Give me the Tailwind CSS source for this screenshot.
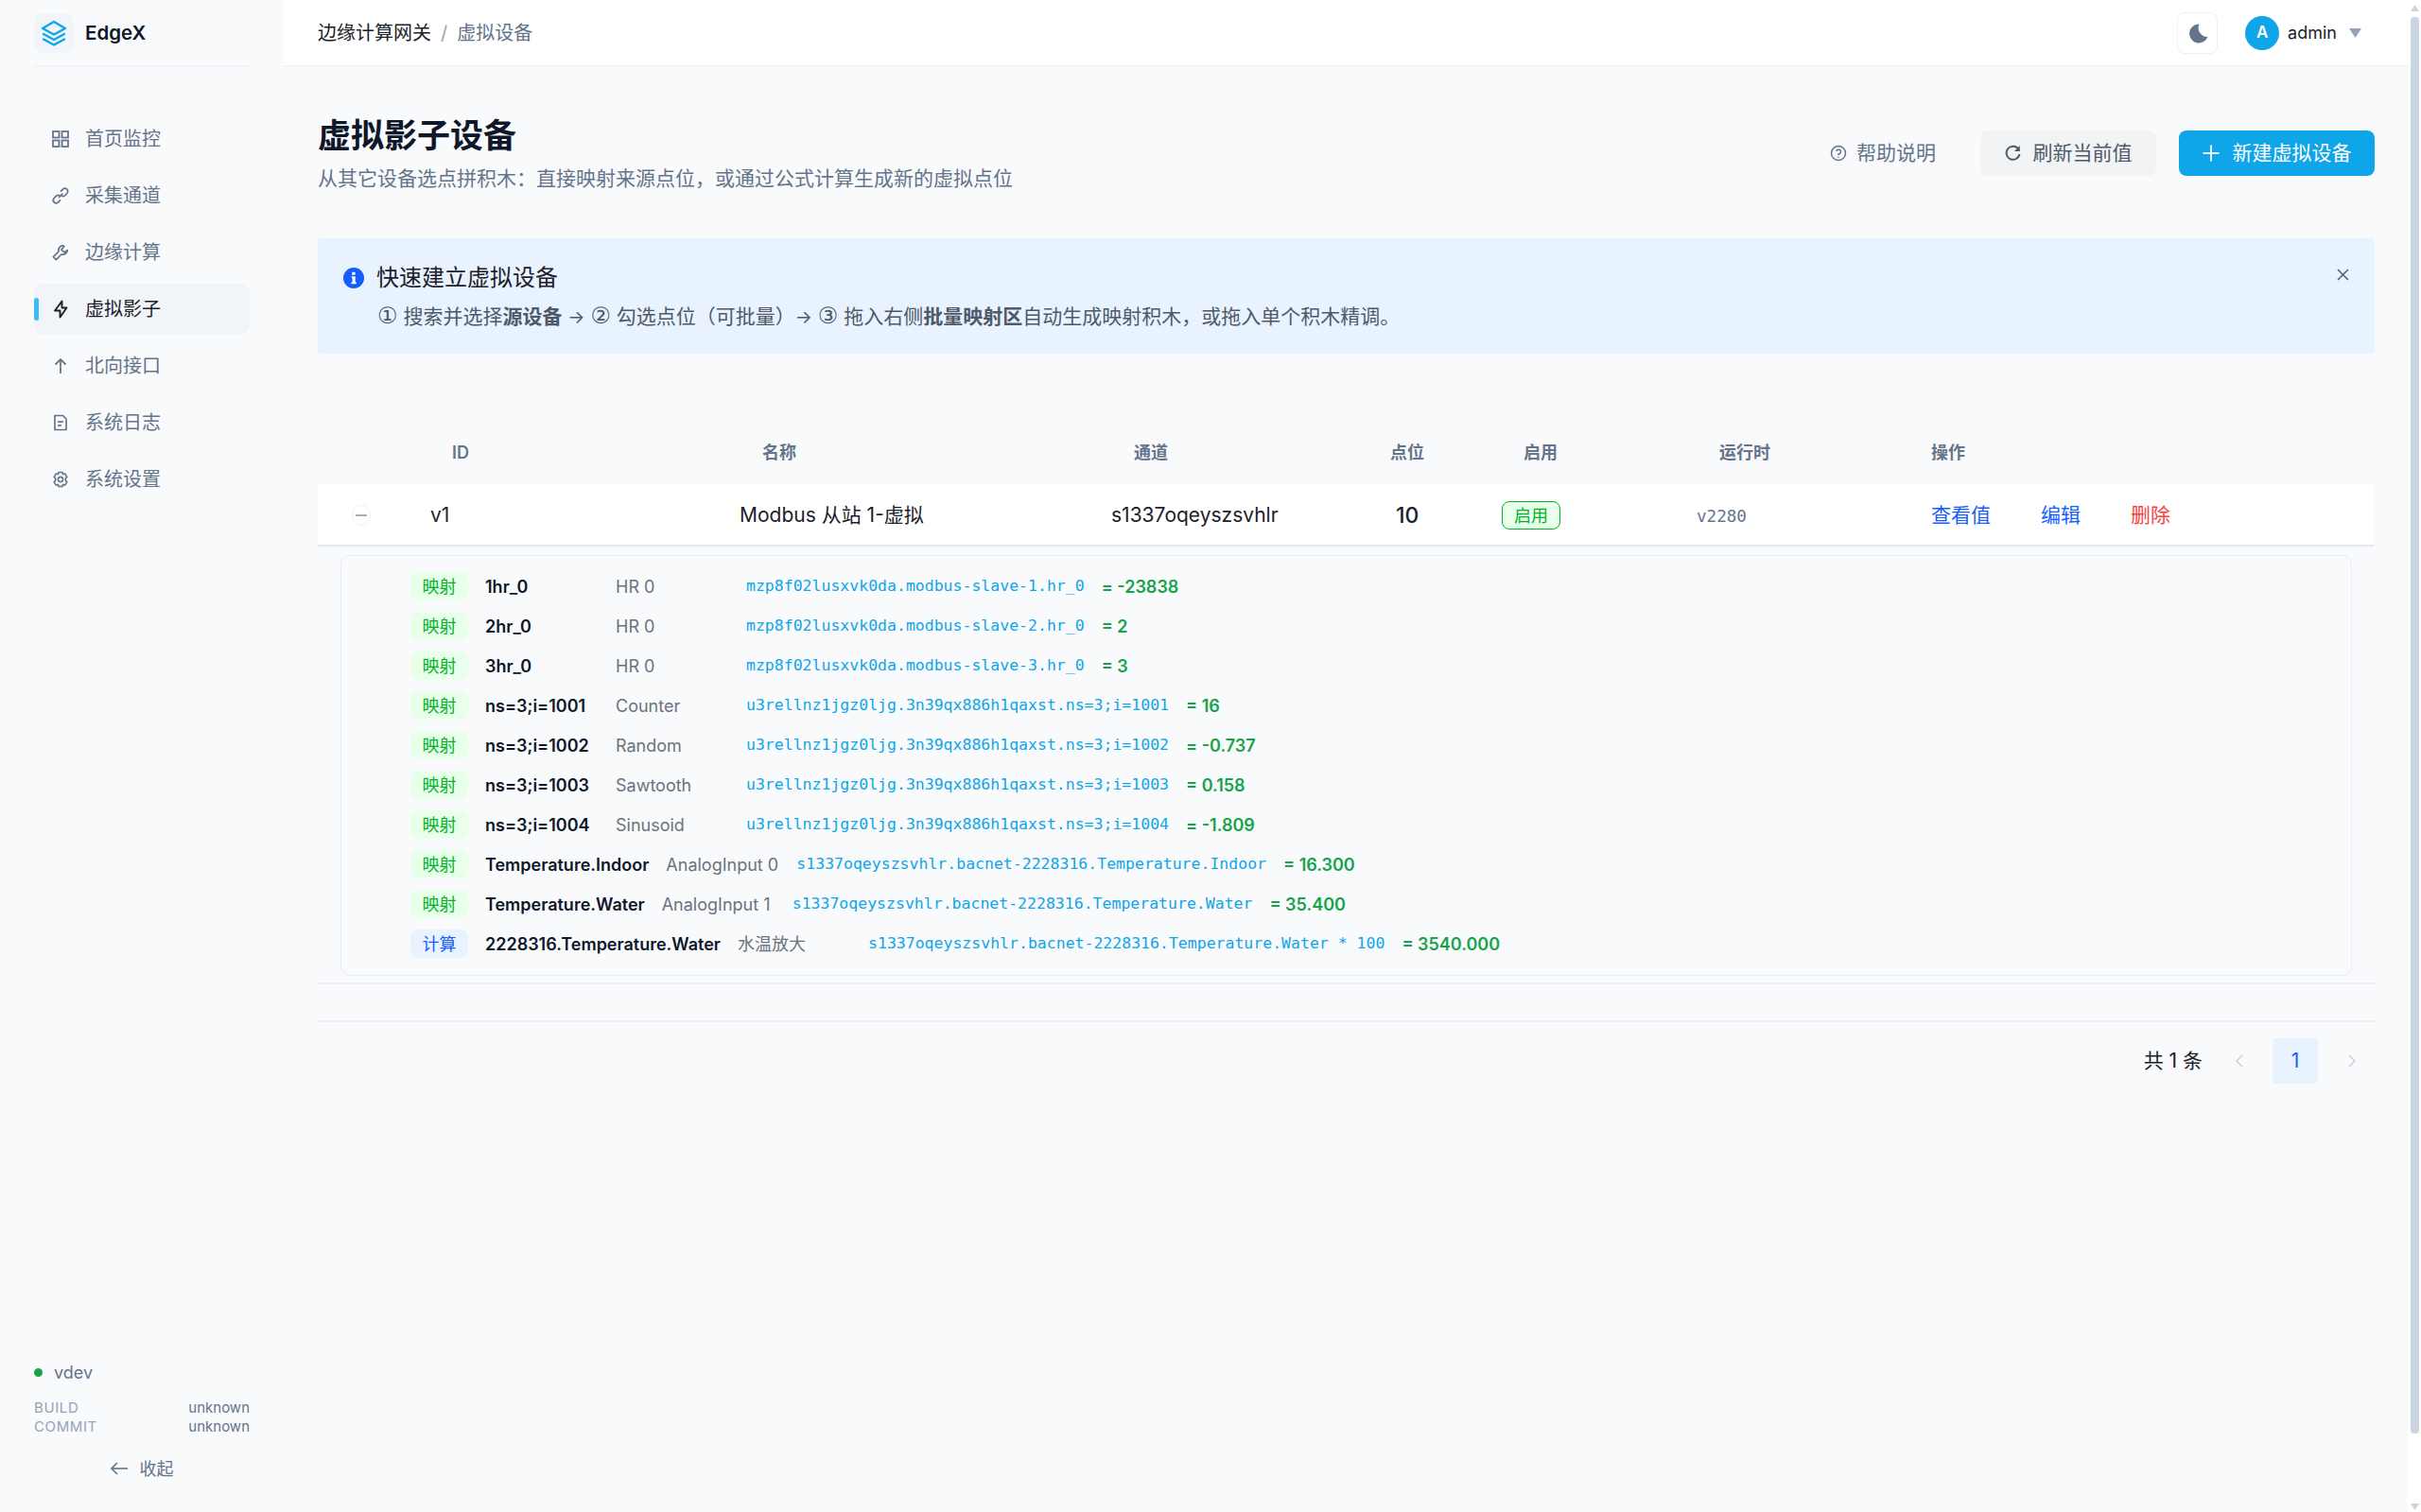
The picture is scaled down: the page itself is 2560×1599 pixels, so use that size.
<!DOCTYPE html>
<html lang="zh-CN">
<head>
    <meta charset="UTF-8">
    <title>虚拟影子设备 | EdgeX</title>
    <script src="https://cdn.jsdelivr.net/npm/@tailwindcss/browser@4"></script>
</head>
<body class="bg-[#f9fafc] font-['Inter','Noto_Sans_CJK_SC',sans-serif] text-[#1d2129] overflow-hidden">
<div class="flex w-[2560px] h-[1599px]">
    <!-- sidebar -->
    <aside class="w-[300px] h-full flex flex-col px-[36px] bg-[#f9fafc]">
        <div class="h-[71px] border-b-2 border-[#f1f3f6] flex items-center gap-[12px] shrink-0">
            <div class="w-[42px] h-[42px] rounded-[10px] bg-[#f1f5f9] flex items-center justify-center">
                <svg class="w-[30px] h-[30px]" viewBox="0 0 30 30" fill="none" stroke="#0ea5e9" stroke-width="2.4" stroke-linejoin="round" stroke-linecap="round"><path d="M15 3 L27 10 L15 16.5 L3 10 Z"/><path d="M4 16 L15 22 L26 16"/><path d="M4 21.5 L15 27.5 L26 21.5"/></svg>
            </div>
            <span class="pt-[2px] text-[20.5px] leading-none font-semibold text-[#0f172a]">EdgeX</span>
        </div>
        <nav class="mt-[49px] flex flex-col gap-[6px] text-[20px] text-[#64748b]">
            <a class="h-[54px] flex items-center gap-[17px] pl-[19px]">
                <svg class="w-[18px] h-[18px]" viewBox="0 0 18 18" fill="none" stroke="currentColor" stroke-width="1.8"><rect x="1" y="1" width="6.5" height="6.5"/><rect x="10.5" y="1" width="6.5" height="6.5"/><rect x="1" y="10.5" width="6.5" height="6.5"/><rect x="10.5" y="10.5" width="6.5" height="6.5"/></svg>
                <span>首页监控</span>
            </a>
            <a class="h-[54px] flex items-center gap-[17px] pl-[19px]">
                <svg class="w-[18px] h-[18px]" viewBox="0 0 18 18" fill="none" stroke="currentColor" stroke-width="1.7" stroke-linecap="round"><path d="M7.5 10.5 L11 7"/><path d="M9.5 4.2 L11.5 2.2 A3 3 0 0 1 15.8 6.5 L13.5 8.8 A3 3 0 0 1 9.5 8.5"/><path d="M8.5 13.8 L6.5 15.8 A3 3 0 0 1 2.2 11.5 L4.5 9.2 A3 3 0 0 1 8.5 9.5"/></svg>
                <span>采集通道</span>
            </a>
            <a class="h-[54px] flex items-center gap-[17px] pl-[19px]">
                <svg class="w-[18px] h-[18px]" viewBox="0 0 18 18" fill="none" stroke="currentColor" stroke-width="1.7" stroke-linejoin="round"><path d="M11.5 1.6 A5 5 0 0 0 7 8 L1.4 13.6 L4.4 16.6 L10 11 A5 5 0 0 0 16.4 6.5 L13.4 9 L9.8 6.2 L12.8 2.4 Z"/></svg>
                <span>边缘计算</span>
            </a>
            <a class="relative h-[54px] flex items-center gap-[17px] pl-[19px] rounded-[10px] bg-[#f1f5fa] text-[#1d2129]">
                <span class="absolute left-0 top-[15px] w-[5px] h-[24px] rounded-[3px] bg-[#38bdf8]"></span>
                <svg class="w-[18px] h-[20px]" viewBox="0 0 18 20" fill="none" stroke="currentColor" stroke-width="1.9" stroke-linejoin="round"><path d="M10.5 1.5 L3 11.5 L8.5 11.5 L8.5 18.5 L15.5 8.5 L10.5 8.5 Z"/></svg>
                <span>虚拟影子</span>
            </a>
            <a class="h-[54px] flex items-center gap-[17px] pl-[19px]">
                <svg class="w-[18px] h-[18px]" viewBox="0 0 18 18" fill="none" stroke="currentColor" stroke-width="1.8"><path d="M9 17 L9 2"/><path d="M3.5 7.5 L9 2 L14.5 7.5"/></svg>
                <span>北向接口</span>
            </a>
            <a class="h-[54px] flex items-center gap-[17px] pl-[19px]">
                <svg class="w-[18px] h-[18px]" viewBox="0 0 18 18" fill="none" stroke="currentColor" stroke-width="1.7"><path d="M3 1.5 L11.5 1.5 L15 5 L15 16.5 L3 16.5 Z"/><path d="M6 8 L12 8"/><path d="M6 12 L10 12"/></svg>
                <span>系统日志</span>
            </a>
            <a class="h-[54px] flex items-center gap-[17px] pl-[19px]">
                <svg class="w-[18px] h-[18px]" viewBox="0 0 18 18" fill="none" stroke="currentColor" stroke-width="1.6" stroke-linejoin="round"><path d="M7 1.5 L11 1.5 L11.6 3.6 L13.6 2.9 L15.8 6.4 L14.3 8 L14.3 10 L15.8 11.6 L13.6 15.1 L11.6 14.4 L11 16.5 L7 16.5 L6.4 14.4 L4.4 15.1 L2.2 11.6 L3.7 10 L3.7 8 L2.2 6.4 L4.4 2.9 L6.4 3.6 Z"/><circle cx="9" cy="9" r="2.6"/></svg>
                <span>系统设置</span>
            </a>
        </nav>
        <div class="mt-auto pb-[33px]">
            <div class="flex items-center gap-[12px] h-[26px] text-[18px] text-[#64748b]">
                <span class="w-[9px] h-[9px] rounded-full bg-[#16a34a]"></span>
                <span>vdev</span>
            </div>
            <div class="mt-[15px] text-[15px] leading-[20px]">
                <div class="flex justify-between"><span class="text-[#94a3b8] tracking-[0.6px]">BUILD</span><span class="text-[#64748b]">unknown</span></div>
                <div class="flex justify-between"><span class="text-[#94a3b8] tracking-[0.6px]">COMMIT</span><span class="text-[#64748b]">unknown</span></div>
            </div>
            <div class="mt-[21px] h-[26px] flex items-center justify-center gap-[13px] text-[18px] text-[#64748b]">
                <svg class="w-[18px] h-[14px]" viewBox="0 0 18 14" fill="none" stroke="currentColor" stroke-width="1.6"><path d="M18 7 L1 7"/><path d="M7 1 L1 7 L7 13"/></svg>
                <span>收起</span>
            </div>
        </div>
    </aside>

    <!-- main -->
    <main class="w-[2246px] h-full flex flex-col">
        <header class="h-[71px] shrink-0 bg-white border-b-2 border-[#f1f3f6] pl-[36px] pr-[49px] flex items-center">
            <div class="flex items-center text-[20px] pt-[1px]">
                <span class="text-[#1d2129]">边缘计算网关</span>
                <span class="mx-[10px] text-[#94a3b8]">/</span>
                <span class="text-[#64748b]">虚拟设备</span>
            </div>
            <div class="ml-auto flex items-center">
                <button class="w-[43px] h-[44px] rounded-[8px] border border-[#eef0f4] bg-white flex items-center justify-center">
                    <svg class="w-[24px] h-[24px]" viewBox="0 0 24 24"><path fill="#64748b" d="M13.5 2.5 A10 10 0 1 0 22.5 16 A9.5 9.5 0 0 1 13.5 2.5 Z"/></svg>
                </button>
                <div class="ml-[29px] w-[36px] h-[36px] rounded-full bg-[#0ea5e9] text-white text-[17px] font-semibold flex items-center justify-center">A</div>
                <span class="ml-[9px] text-[18px] text-[#1d2129]">admin</span>
                <svg class="ml-[13px] w-[13px] h-[10px]" viewBox="0 0 13 10"><path fill="#94a3b8" d="M0 0 L13 0 L6.5 10 Z"/></svg>
            </div>
        </header>

        <div class="pl-[36px] pr-[35px]">
            <div class="pt-[50px] flex items-center">
                <div>
                    <h1 class="text-[35px] leading-[44px] font-bold text-[#0f172a]">虚拟影子设备</h1>
                    <p class="mt-[9px] text-[21px] leading-[30px] text-[#64748b]">从其它设备选点拼积木&#xFF1A;直接映射来源点位&#xFF0C;或通过公式计算生成新的虚拟点位</p>
                </div>
                <div class="ml-auto mb-[1px] flex items-center text-[21px]">
                    <button class="h-[48px] flex items-center gap-[10px] text-[#64748b]">
                        <svg class="w-[18px] h-[18px]" viewBox="0 0 18 18" fill="none" stroke="currentColor" stroke-width="1.5"><circle cx="9" cy="9" r="7.5"/><path d="M6.8 7 A2.3 2.3 0 1 1 9 9.8 L9 11"/><path d="M9 12.6 L9 13.8"/></svg>
                        <span>帮助说明</span>
                    </button>
                    <button class="ml-[47px] w-[186px] h-[48px] rounded-[8px] bg-[#f2f3f5] flex items-center justify-center gap-[13px] text-[#4e5969]">
                        <svg class="w-[17px] h-[18px]" viewBox="0 0 17 18" fill="none" stroke="currentColor" stroke-width="1.9"><path d="M14.5 5 A7 7 0 1 0 15.5 10"/><path fill="currentColor" stroke="none" d="M15.8 1 L15.8 7 L10 7 Z"/></svg>
                        <span>刷新当前值</span>
                    </button>
                    <button class="ml-[24px] w-[207px] h-[48px] rounded-[8px] bg-[#0ea5e9] flex items-center justify-center gap-[14px] text-white">
                        <svg class="w-[18px] h-[18px]" viewBox="0 0 18 18" fill="none" stroke="currentColor" stroke-width="1.8"><path d="M9 0.5 L9 17.5"/><path d="M0.5 9 L17.5 9"/></svg>
                        <span>新建虚拟设备</span>
                    </button>
                </div>
            </div>

            <!-- alert -->
            <div class="relative mt-[48px] h-[122px] rounded-[4px] bg-[#e8f3ff] pl-[27px] pt-[24px]">
                <div class="flex items-center gap-[13px] h-[36px]">
                    <svg class="w-[22px] h-[22px]" viewBox="0 0 22 22"><circle cx="11" cy="11" r="11" fill="#165dff"/><path fill="#fff" d="M9.2 4.8 h3.4 v2.9 h-3.4 z M8.8 9.2 h3.9 v6.4 h1.1 v1.7 h-5.4 v-1.7 h1.2 v-4.7 h-0.8 z"/></svg>
                    <span class="text-[24px] text-[#1d2129]">快速建立虚拟设备</span>
                </div>
                <p class="mt-[6px] ml-[36px] text-[21px] leading-[34px] text-[#4e5969]"><span class="font-['DejaVu_Sans'] text-[24px] leading-[20px]">①</span> 搜索并选择<b class="font-bold">源设备</b> <span class="text-[19px]">→</span> <span class="font-['DejaVu_Sans'] text-[24px] leading-[20px]">②</span> 勾选点位&#xFF08;可批量&#xFF09;<span class="text-[19px]">→</span> <span class="font-['DejaVu_Sans'] text-[24px] leading-[20px]">③</span> 拖入右侧<b class="font-bold">批量映射区</b>自动生成映射积木&#xFF0C;或拖入单个积木精调。</p>
                <svg class="absolute right-[27px] top-[32px] w-[13px] h-[13px]" viewBox="0 0 13 13" fill="none" stroke="#4e5969" stroke-width="1.5"><path d="M1 1 L12 12"/><path d="M12 1 L1 12"/></svg>
            </div>

            <!-- table -->
            <div class="mt-[70px] h-[68px] pl-[142px] grid grid-cols-[328px_393px_271px_141px_207px_224px_1fr] items-center text-[18px] font-semibold text-[#64748b]">
                <span>ID</span><span>名称</span><span>通道</span><span>点位</span><span>启用</span><span>运行时</span><span>操作</span>
            </div>
            <div class="h-[66px] bg-white border-b-2 border-[#e5e8ef] pt-[2px] pl-[36px] grid grid-cols-[83px_327px_393px_301px_112px_206px_248px_1fr] items-center text-[21px]">
                <button class="w-[20px] h-[22px] rounded-[10px] border border-[#eef0f4] bg-white flex items-center justify-center">
                    <span class="w-[12px] h-[2px] bg-[#a9aeb8]"></span>
                </button>
                <span>v1</span>
                <span>Modbus 从站 1-虚拟</span>
                <span>s1337oqeyszsvhlr</span>
                <span class="text-[23px] font-medium">10</span>
                <span class="w-[62px] h-[30px] rounded-[8px] border border-[#00b42a] bg-[#e8ffea] text-[#00b42a] text-[18px] flex items-center justify-center">启用</span>
                <span class="mt-[2px] font-['DejaVu_Sans_Mono',monospace] text-[17.6px] text-[#64748b]">v2280</span>
                <div class="flex items-center text-[21px]">
                    <span class="text-[#165dff]">查看值</span>
                    <span class="ml-[53px] text-[#165dff]">编辑</span>
                    <span class="ml-[53px] text-[#f53f3f]">删除</span>
                </div>
            </div>

            <div class="mx-[24px] mt-[9px] h-[445px] rounded-[10px] border border-[#e8ebf0] pt-[11px] pl-[73px] text-[18px]">
                <div class="h-[42px] flex items-center gap-[18px]">
                    <span class="w-[61px] h-[30px] rounded-[8px] bg-[#e8ffea] text-[#00b42a] flex items-center justify-center">映射</span>
                    <span class="min-w-[120px] font-semibold text-[#0f172a]">1hr_0</span>
                    <span class="min-w-[120px] text-[#6b7280]">HR 0</span>
                    <span class="font-['DejaVu_Sans_Mono',monospace] text-[16.5px] text-[#0ea5e9]">mzp8f02lusxvk0da.modbus-slave-1.hr_0</span>
                    <span class="font-semibold text-[#16a34a]">= -23838</span>
                </div>
                <div class="h-[42px] flex items-center gap-[18px]">
                    <span class="w-[61px] h-[30px] rounded-[8px] bg-[#e8ffea] text-[#00b42a] flex items-center justify-center">映射</span>
                    <span class="min-w-[120px] font-semibold text-[#0f172a]">2hr_0</span>
                    <span class="min-w-[120px] text-[#6b7280]">HR 0</span>
                    <span class="font-['DejaVu_Sans_Mono',monospace] text-[16.5px] text-[#0ea5e9]">mzp8f02lusxvk0da.modbus-slave-2.hr_0</span>
                    <span class="font-semibold text-[#16a34a]">= 2</span>
                </div>
                <div class="h-[42px] flex items-center gap-[18px]">
                    <span class="w-[61px] h-[30px] rounded-[8px] bg-[#e8ffea] text-[#00b42a] flex items-center justify-center">映射</span>
                    <span class="min-w-[120px] font-semibold text-[#0f172a]">3hr_0</span>
                    <span class="min-w-[120px] text-[#6b7280]">HR 0</span>
                    <span class="font-['DejaVu_Sans_Mono',monospace] text-[16.5px] text-[#0ea5e9]">mzp8f02lusxvk0da.modbus-slave-3.hr_0</span>
                    <span class="font-semibold text-[#16a34a]">= 3</span>
                </div>
                <div class="h-[42px] flex items-center gap-[18px]">
                    <span class="w-[61px] h-[30px] rounded-[8px] bg-[#e8ffea] text-[#00b42a] flex items-center justify-center">映射</span>
                    <span class="min-w-[120px] font-semibold text-[#0f172a]">ns=3;i=1001</span>
                    <span class="min-w-[120px] text-[#6b7280]">Counter</span>
                    <span class="font-['DejaVu_Sans_Mono',monospace] text-[16.5px] text-[#0ea5e9]">u3rellnz1jgz0ljg.3n39qx886h1qaxst.ns=3;i=1001</span>
                    <span class="font-semibold text-[#16a34a]">= 16</span>
                </div>
                <div class="h-[42px] flex items-center gap-[18px]">
                    <span class="w-[61px] h-[30px] rounded-[8px] bg-[#e8ffea] text-[#00b42a] flex items-center justify-center">映射</span>
                    <span class="min-w-[120px] font-semibold text-[#0f172a]">ns=3;i=1002</span>
                    <span class="min-w-[120px] text-[#6b7280]">Random</span>
                    <span class="font-['DejaVu_Sans_Mono',monospace] text-[16.5px] text-[#0ea5e9]">u3rellnz1jgz0ljg.3n39qx886h1qaxst.ns=3;i=1002</span>
                    <span class="font-semibold text-[#16a34a]">= -0.737</span>
                </div>
                <div class="h-[42px] flex items-center gap-[18px]">
                    <span class="w-[61px] h-[30px] rounded-[8px] bg-[#e8ffea] text-[#00b42a] flex items-center justify-center">映射</span>
                    <span class="min-w-[120px] font-semibold text-[#0f172a]">ns=3;i=1003</span>
                    <span class="min-w-[120px] text-[#6b7280]">Sawtooth</span>
                    <span class="font-['DejaVu_Sans_Mono',monospace] text-[16.5px] text-[#0ea5e9]">u3rellnz1jgz0ljg.3n39qx886h1qaxst.ns=3;i=1003</span>
                    <span class="font-semibold text-[#16a34a]">= 0.158</span>
                </div>
                <div class="h-[42px] flex items-center gap-[18px]">
                    <span class="w-[61px] h-[30px] rounded-[8px] bg-[#e8ffea] text-[#00b42a] flex items-center justify-center">映射</span>
                    <span class="min-w-[120px] font-semibold text-[#0f172a]">ns=3;i=1004</span>
                    <span class="min-w-[120px] text-[#6b7280]">Sinusoid</span>
                    <span class="font-['DejaVu_Sans_Mono',monospace] text-[16.5px] text-[#0ea5e9]">u3rellnz1jgz0ljg.3n39qx886h1qaxst.ns=3;i=1004</span>
                    <span class="font-semibold text-[#16a34a]">= -1.809</span>
                </div>
                <div class="h-[42px] flex items-center gap-[18px]">
                    <span class="w-[61px] h-[30px] rounded-[8px] bg-[#e8ffea] text-[#00b42a] flex items-center justify-center">映射</span>
                    <span class="min-w-[120px] font-semibold text-[#0f172a]">Temperature.Indoor</span>
                    <span class="min-w-[120px] text-[#6b7280]">AnalogInput 0</span>
                    <span class="font-['DejaVu_Sans_Mono',monospace] text-[16.5px] text-[#0ea5e9]">s1337oqeyszsvhlr.bacnet-2228316.Temperature.Indoor</span>
                    <span class="font-semibold text-[#16a34a]">= 16.300</span>
                </div>
                <div class="h-[42px] flex items-center gap-[18px]">
                    <span class="w-[61px] h-[30px] rounded-[8px] bg-[#e8ffea] text-[#00b42a] flex items-center justify-center">映射</span>
                    <span class="min-w-[120px] font-semibold text-[#0f172a]">Temperature.Water</span>
                    <span class="min-w-[120px] text-[#6b7280]">AnalogInput 1</span>
                    <span class="font-['DejaVu_Sans_Mono',monospace] text-[16.5px] text-[#0ea5e9]">s1337oqeyszsvhlr.bacnet-2228316.Temperature.Water</span>
                    <span class="font-semibold text-[#16a34a]">= 35.400</span>
                </div>
                <div class="h-[42px] flex items-center gap-[18px]">
                    <span class="w-[61px] h-[30px] rounded-[8px] bg-[#e8f3ff] text-[#165dff] flex items-center justify-center">计算</span>
                    <span class="min-w-[120px] font-semibold text-[#0f172a]">2228316.Temperature.Water</span>
                    <span class="min-w-[120px] text-[#6b7280]">水温放大</span>
                    <span class="font-['DejaVu_Sans_Mono',monospace] text-[16.5px] text-[#0ea5e9]">s1337oqeyszsvhlr.bacnet-2228316.Temperature.Water * 100</span>
                    <span class="font-semibold text-[#16a34a]">= 3540.000</span>
                </div>
            </div>
            <div class="mt-[7px] h-[2px] bg-[#e9ecf1]"></div>
            <div class="mt-[38px] h-[2px] bg-[#eceef2]"></div>

            <!-- pagination -->
            <div class="mt-[17px] flex items-center justify-end text-[21px]">
                <span class="mr-[14px]">共 1 条</span>
                <div class="w-[48px] h-[48px] flex items-center justify-center">
                    <svg class="w-[9px] h-[14px]" viewBox="0 0 9 14" fill="none" stroke="#c9cdd4" stroke-width="1.4"><path d="M8 1 L2 7 L8 13"/></svg>
                </div>
                <div class="ml-[12px] w-[48px] h-[48px] rounded-[4px] bg-[#e8f3ff] text-[#165dff] flex items-center justify-center">1</div>
                <div class="ml-[12px] w-[48px] h-[48px] flex items-center justify-center">
                    <svg class="w-[9px] h-[14px]" viewBox="0 0 9 14" fill="none" stroke="#c9cdd4" stroke-width="1.4"><path d="M1 1 L7 7 L1 13"/></svg>
                </div>
            </div>
        </div>
    </main>

    <!-- scrollbar -->
    <div class="w-[14px] h-full bg-white pl-[3px]">
        <svg class="block mt-[5px] w-[9px] h-[7px]" viewBox="0 0 9 7"><path fill="#cbd5e1" d="M4.5 0 L9 7 L0 7 Z"/></svg>
        <div class="mt-[6px] w-[9px] h-[1498px] rounded-[4px] bg-[#cbd5e1]"></div>
        <svg class="block mt-[74px] w-[9px] h-[7px]" viewBox="0 0 9 7"><path fill="#cbd5e1" d="M0 0 L9 0 L4.5 7 Z"/></svg>
    </div>
</div>
</body>
</html>
